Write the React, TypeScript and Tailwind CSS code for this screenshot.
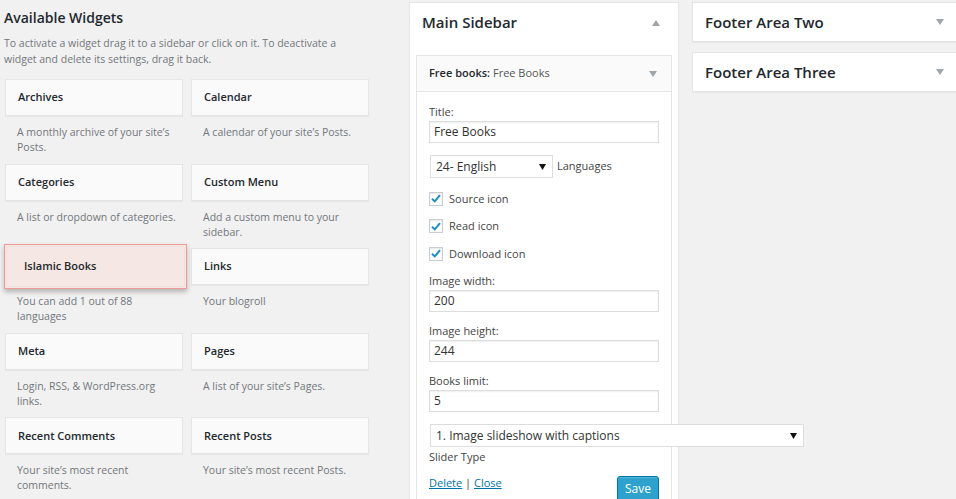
import React from "react";

const FONT = { fontFamily: '"Open Sans", "Noto Sans", Arial, sans-serif' };

const widgets: { title: string; desc: string }[] = [
  { title: "Archives", desc: "A monthly archive of your site’s Posts." },
  { title: "Calendar", desc: "A calendar of your site’s Posts." },
  { title: "Categories", desc: "A list or dropdown of categories." },
  { title: "Custom Menu", desc: "Add a custom menu to your sidebar." },
  { title: "Islamic Books", desc: "You can add 1 out of 88 languages" },
  { title: "Links", desc: "Your blogroll" },
  { title: "Meta", desc: "Login, RSS, & WordPress.org links." },
  { title: "Pages", desc: "A list of your site’s Pages." },
  { title: "Recent Comments", desc: "Your site’s most recent comments." },
  { title: "Recent Posts", desc: "Your site’s most recent Posts." },
];

function Tri({ up = false }: { up?: boolean }) {
  return (
    <svg width="8" height="6" viewBox="0 0 8 6" className="shrink-0">
      {up ? (
        <polygon points="0,6 8,6 4,0" fill="#a0a5aa" />
      ) : (
        <polygon points="0,0 8,0 4,6" fill="#a0a5aa" />
      )}
    </svg>
  );
}

function BlackTri() {
  return (
    <svg width="7" height="6" viewBox="0 0 7 6" className="shrink-0">
      <polygon points="0,0 7,0 3.5,6" fill="#111" />
    </svg>
  );
}

function Check({ label }: { label: string }) {
  return (
    <div className="flex h-[27.5px] items-center">
      <div className="flex h-[14px] w-[14px] items-center justify-center border border-[#c9cdd1] bg-white shadow-[inset_0_1px_2px_rgba(0,0,0,0.1)]">
        <svg width="10" height="9" viewBox="0 0 10 9">
          <path d="M1 4.8 L3.8 7.4 L9 1.2" fill="none" stroke="#1e8cbe" strokeWidth="2" />
        </svg>
      </div>
      <span className="ml-[6px] text-[11px] leading-[16px] text-[#444]">{label}</span>
    </div>
  );
}

function TextInput({ value }: { value: string }) {
  return (
    <div className="mt-[1px] flex h-[22px] items-center border border-[#dddddd] bg-white px-[4px] text-[12px] text-[#333] shadow-[inset_0_1px_2px_rgba(0,0,0,0.07)]">
      {value}
    </div>
  );
}

function Label({ children, className = "" }: { children: React.ReactNode; className?: string }) {
  return <div className={`text-[11px] leading-[16px] text-[#444] ${className}`}>{children}</div>;
}

export default function App() {
  return (
    <div style={FONT} className="flex h-[499px] w-[956px] overflow-hidden bg-[#f1f1f1]">
      {/* Left column */}
      <div className="w-[409px] shrink-0 pl-[4px]">
        <h2 className="mt-[8px] text-[14px] font-semibold leading-[20px] text-[#23282d]">Available Widgets</h2>
        <p className="mt-[7px] w-[350px] text-[10.5px] leading-[16px] text-[#72777c]">
          To activate a widget drag it to a sidebar or click on it. To deactivate a widget and delete its settings, drag it back.
        </p>
        <div className="ml-[1px] mt-[12px] grid w-[364px] grid-cols-2 gap-x-[8px]">
          {widgets.map((w) => {
            const dragging = w.title === "Islamic Books";
            return (
              <div key={w.title} className="h-[84.6px]">
                <div className="relative h-[37px]">
                  {dragging ? (
                    <div className="absolute -left-[1px] -right-[4px] -top-[4px] -bottom-[4px] z-10 border border-[#f09a9a] bg-[#f5e7e3] p-[1px] shadow-[0_3px_5px_rgba(0,0,0,0.25)]">
                      <div className="flex h-full items-center border border-[#efe0dc] pl-[17px] text-[11px] font-semibold text-[#23282d]">
                        {w.title}
                      </div>
                    </div>
                  ) : (
                    <div className="flex h-full items-center border border-[#e5e5e5] bg-[#fafafa] pl-[12px] text-[11px] font-semibold text-[#23282d] shadow-[0_1px_1px_rgba(0,0,0,0.04)]">
                      {w.title}
                    </div>
                  )}
                </div>
                <p className="pl-[12px] pr-[6px] pt-[9px] text-[10.5px] leading-[15px] text-[#72777c]">{w.desc}</p>
              </div>
            );
          })}
        </div>
      </div>

      {/* Main Sidebar */}
      <div className="mt-[2px] h-[520px] w-[270px] shrink-0 border border-[#e5e5e5] bg-white shadow-[0_1px_1px_rgba(0,0,0,0.04)]">
        <div className="flex h-[39px] items-center justify-between pl-[12px] pr-[18px]">
          <span className="text-[15px] font-semibold text-[#23282d]">Main Sidebar</span>
          <Tri up />
        </div>
        <div className="relative mx-[6px] mt-[13px] border border-[#e5e5e5] bg-white">
          <div className="flex h-[36px] items-center justify-between border-b border-[#e5e5e5] bg-[#fafafa] pl-[12px] pr-[14px]">
            <span className="text-[11px] text-[#23282d]">
              <span className="font-semibold">Free books:</span> <span className="text-[#555]">Free Books</span>
            </span>
            <Tri />
          </div>
          <div className="pb-[20px] pl-[12px] pr-[12px]">
            <Label className="pt-[12px]">Title:</Label>
            <TextInput value="Free Books" />
            <div className="mt-[12px] flex items-center">
              <div className="ml-[1px] flex h-[23px] w-[123px] items-center justify-between border border-[#dddddd] bg-white pl-[5px] pr-[6px] text-[12px] text-[#333]">
                <span>24- English</span>
                <BlackTri />
              </div>
              <span className="ml-[4px] text-[11px] text-[#444]">Languages</span>
            </div>
            <div className="mt-[7px]">
              <Check label="Source icon" />
              <Check label="Read icon" />
              <Check label="Download icon" />
            </div>
            <Label className="mt-[5.5px]">Image width:</Label>
            <TextInput value="200" />
            <Label className="mt-[11px]">Image height:</Label>
            <TextInput value="244" />
            <Label className="mt-[11px]">Books limit:</Label>
            <TextInput value="5" />
            <div className="relative z-10 ml-[1px] mt-[12px] flex h-[23px] w-[374px] items-center justify-between border border-[#dddddd] bg-white pl-[5px] pr-[6px] text-[12px] text-[#333]">
              <span>1. Image slideshow with captions</span>
              <BlackTri />
            </div>
            <Label className="mt-[2px]">Slider Type</Label>
            <div className="mt-[11px] flex items-start justify-between">
              <div className="-mt-[1px] text-[11px] leading-[16px] text-[#0073aa]">
                <span className="underline">Delete</span>
                <span className="text-[#444]"> | </span>
                <span className="underline">Close</span>
              </div>
              <div className="flex h-[26px] w-[42px] items-center justify-center rounded-[3px] border border-[#0074a2] bg-[#2ea2cc] text-[12px] text-white shadow-[inset_0_1px_0_rgba(120,200,230,0.5)]">
                Save
              </div>
            </div>
          </div>
        </div>
      </div>

      {/* Right column */}
      <div className="ml-[13px] mt-[2px] flex w-[280px] shrink-0 flex-col gap-[10px]">
        <div className="flex h-[40px] items-center justify-between border border-[#e5e5e5] bg-white pl-[12px] pr-[27px] shadow-[0_1px_1px_rgba(0,0,0,0.04)]">
          <span className="text-[15px] font-semibold text-[#23282d]">Footer Area Two</span>
          <Tri />
        </div>
        <div className="flex h-[40px] items-center justify-between border border-[#e5e5e5] bg-white pl-[12px] pr-[27px] shadow-[0_1px_1px_rgba(0,0,0,0.04)]">
          <span className="text-[15px] font-semibold text-[#23282d]">Footer Area Three</span>
          <Tri />
        </div>
      </div>
    </div>
  );
}
